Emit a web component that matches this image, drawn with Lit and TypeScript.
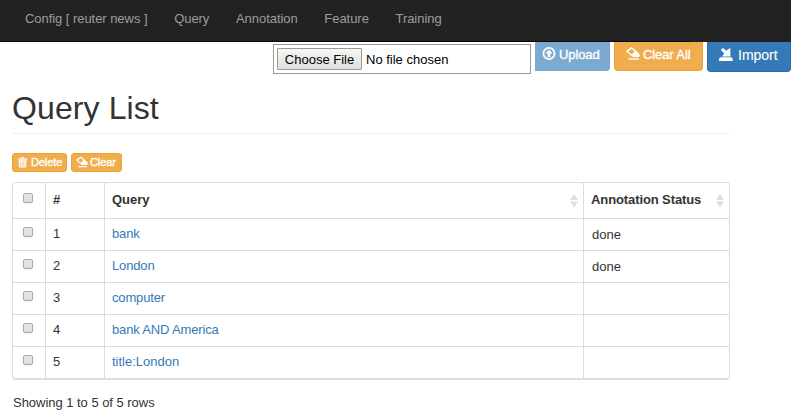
import { LitElement, html, css, svg } from "lit";
import { customElement } from "lit/decorators.js";

const eraser = svg`<path fill-rule="evenodd" d="M5.6 0 9.6 3.2 13.6 7.2V9.2L12.6 10H6.8L.2 4.6V3.8ZM5.6 1.7 2.2 4.5 5.6 7.4 8.8 4.3Z"/><path d="M2.4 11.2h10.4v1.4H2.4Z"/>`;
const trash = svg`<path fill-rule="evenodd" d="M1 2.3h3.6V.6h3.8v1.7H12v1.5H1ZM5.6 1.5v.8h1.8v-.8ZM1.8 4.6h9.4L10.7 13H2.3ZM3.6 5.8v6h.7v-6ZM5.5 5.8v6h.6v-6ZM7.3 5.8v6h.6v-6ZM9.1 5.8v6h.6v-6Z"/>`;
const upload = svg`<circle cx="7" cy="6.5" r="5.6" fill="none" stroke="currentColor" stroke-width="1.8"/><path d="M7 2.6 10.6 6.5H8.3v3.6H5.7V6.5H3.4Z"/>`;
const importIcon = svg`<path d="M2.3 1.2 4.2 0 7 2.8 11.3 0 11.5 8.5H3.1L5.3 5.2 2.6 3Z"/><path d="M1.5 9.2h10.7l1.5 1.5V13H0v-2.3Z"/>`;

const rows = [
  { query: "bank", status: "done" },
  { query: "London", status: "done" },
  { query: "computer", status: "" },
  { query: "bank AND America", status: "" },
  { query: "title:London", status: "" },
];

const icon = (shape: unknown) => html`<svg class="icon" viewBox="0 0 14 13" fill="currentColor">${shape}</svg>`;
const sorter = html`<svg class="sort" viewBox="0 0 8 14"><path d="M4 0 8 6H0ZM0 7.5h8L4 13.5Z" fill="#ddd"/></svg>`;

@customElement("app-root")
export class AppRoot extends LitElement {
  static styles = css`
    :host { display: block; height: 418px; overflow: hidden; background: #fff; color: #333; font: 13px/18px "Liberation Sans", Arial, sans-serif; }
    * { box-sizing: border-box; }
    nav { display: flex; height: 42px; padding: 10px 0 0 25px; background: linear-gradient(#080808, #080808) 0 100% / 691px 1px no-repeat #222; color: #9d9d9d; letter-spacing: -.05px; }
    nav a { margin-right: 26.7px; white-space: nowrap; }
    .toolbar { display: flex; height: 32px; padding-left: 273px; align-items: flex-start; }
    .file { display: flex; width: 258px; height: 30px; margin: 2px 4px 0 0; padding: 3px; border: 1px solid #999; color: #000; line-height: 23px; }
    .choose { width: 85px; height: 22px; margin-right: 4px; border: 1px solid #9b9b94; border-radius: 1px; background: linear-gradient(#f6f6f6, #dededa); text-align: center; line-height: 21px; }
    .btn { display: flex; align-items: flex-start; color: #fff; white-space: nowrap; border: 1px solid #eea236; background: #f0ad4e; border-radius: 3px; -webkit-text-stroke: .35px currentColor; }
    .icon { display: block; flex: none; width: 14px; height: 13px; }
    .toolbar .btn { border-top: 0; border-radius: 0 0 4px 4px; height: 29px; line-height: 25px; letter-spacing: -.1px; }
    .toolbar .upload { width: 75px; margin-right: 4px; padding: 0 0 0 6px; background: #7ca9d0; border-color: #7ca9d0 #78a1c7; border-left: 1px solid #7ca9d0; border-radius: 0 0 4px 0; }
    .toolbar .all { width: 89px; margin-right: 4px; padding-left: 11px; }
    .toolbar .import { width: 84px; height: 30px; padding-left: 11px; background: #337ab7; border-color: #2e6da4; font-size: 14px; line-height: 27px; letter-spacing: 0; -webkit-text-stroke: .1px currentColor; }
    .toolbar .icon { margin: 5px 3px 0 0; }
    .toolbar .import .icon { margin: 6px 5px 0 0; }
    main { width: 718px; margin-left: 12px; }
    h1 { height: 60px; margin: 0; padding-top: 16px; border-bottom: 1px solid #eee; font-size: 32px; line-height: 37px; font-weight: 400; letter-spacing: .1px; }
    .actions { display: flex; gap: 4px; margin: 19px 0 10px; height: 19px; font-size: 11px; line-height: 17px; letter-spacing: -.1px; }
    .actions .btn { padding-left: 4px; width: 55px; }
    .actions .clear { width: 51px; }
    .actions .icon { width: 12px; height: 12px; margin: 2px 2px 0 0; }
    .table { border: 1px solid #ddd; border-bottom-width: 2px; border-radius: 4px; height: 198px; }
    .row { display: grid; grid-template-columns: 33px 59px 479px 145px; height: 32px; border-bottom: 1px solid #ddd; }
    .row:last-child { border-bottom: 0; }
    .head { height: 36px; font-weight: 700; }
    .cell { border-right: 1px solid #ddd; padding: 6px 7px 0; white-space: nowrap; }
    .cell:last-child { border-right: 0; padding-top: 7px; padding-left: 8px; }
    .head .cell, .head .cell:last-child { display: flex; justify-content: space-between; padding: 8px 5px 0 7px; }
    .row .cell:first-child { padding: 8px 0 0 10px; }
    .head .cell:first-child { padding-top: 10px; }
    .check { display: block; width: 10px; height: 10px; border: 1px solid #aaa; border-radius: 2px; background: linear-gradient(#e6e6e6, #dedede); box-shadow: 0 1px 1px #eee; }
    .sort { width: 8px; height: 14px; margin-top: 3px; }
    .link { color: #337ab7; letter-spacing: -.15px; }
    .link.wide { letter-spacing: 0; }
    .status { letter-spacing: -.1px; }
    footer { margin: 14px 0 0 1px; letter-spacing: -.03px; }
  `;

  render() {
    return html`
      <nav>${["Config [ reuter news ]", "Query", "Annotation", "Feature", "Training"].map((label) => html`<a>${label}</a>`)}</nav>
      <div class="toolbar">
        <div class="file"><span class="choose">Choose File</span><span>No file chosen</span></div>
        <div class="btn upload">${icon(upload)}<span>Upload</span></div>
        <div class="btn all">${icon(eraser)}<span>Clear All</span></div>
        <div class="btn import">${icon(importIcon)}<span>Import</span></div>
      </div>
      <main>
        <h1>Query List</h1>
        <div class="actions">
          <div class="btn">${icon(trash)}<span>Delete</span></div>
          <div class="btn clear">${icon(eraser)}<span>Clear</span></div>
        </div>
        <div class="table">
          <div class="row head">
            <div class="cell"><span class="check"></span></div>
            <div class="cell">#</div>
            <div class="cell"><span>Query</span>${sorter}</div>
            <div class="cell"><span class="status">Annotation Status</span>${sorter}</div>
          </div>
          ${rows.map((row, i) => html`<div class="row">
            <div class="cell"><span class="check"></span></div>
            <div class="cell">${i + 1}</div>
            <div class="cell link ${row.query.includes(":") ? "wide" : ""}">${row.query}</div>
            <div class="cell">${row.status}</div>
          </div>`)}
        </div>
        <footer>Showing 1 to 5 of 5 rows</footer>
      </main>
    `;
  }
}
